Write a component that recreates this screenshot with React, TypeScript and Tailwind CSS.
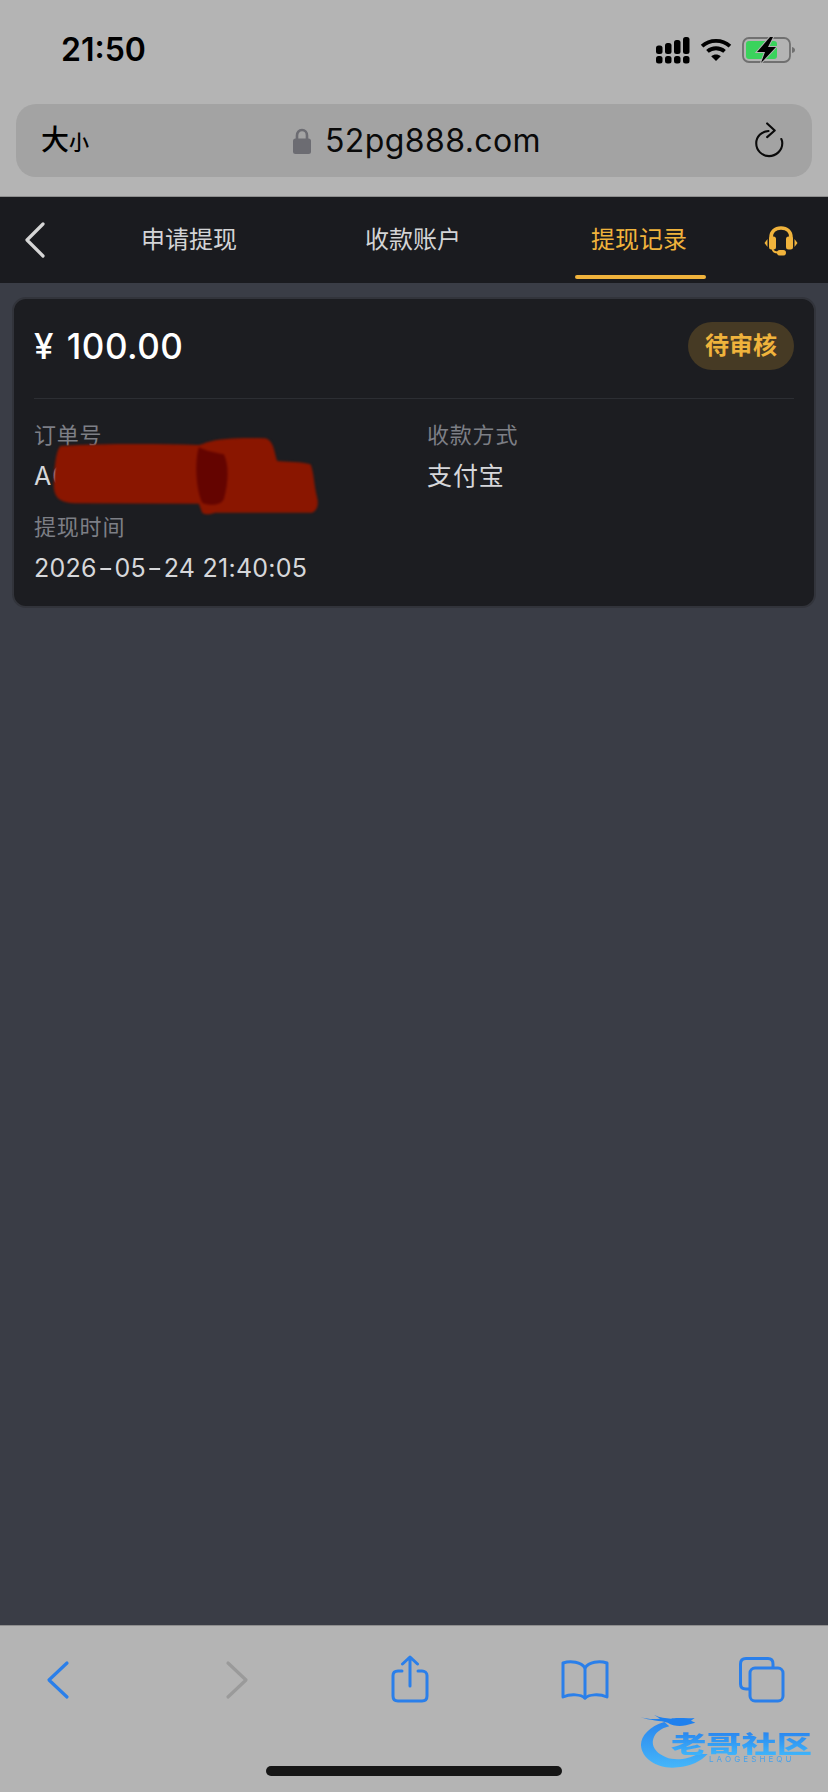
const sans = "font-['Inter','Noto_Sans_CJK_SC',sans-serif]";

function Signal() {
  return (
    <svg width="34" height="27" viewBox="0 0 34 27" fill="#000">
      <rect x="0" y="8.500" width="6.500" height="8.500" rx="2.500" />
      <rect x="9" y="6" width="6.500" height="11" rx="2.500" />
      <rect x="18" y="3" width="6.500" height="14" rx="2.500" />
      <rect x="27" y="0" width="6.500" height="17" rx="2.500" />
      <rect x="0" y="19" width="6.500" height="7.500" rx="2.500" />
      <rect x="9" y="19" width="6.500" height="7.500" rx="2.500" />
      <rect x="18" y="19" width="6.500" height="7.500" rx="2.500" />
      <rect x="27" y="19" width="6.500" height="7.500" rx="2.500" />
    </svg>
  );
}

function Wifi() {
  return (
    <svg width="32" height="24" viewBox="0 0 33 25" fill="none" stroke="#000" strokeWidth="4">
      <path d="M2 9.500C10 2.200 23 2.200 31 9.500" />
      <path d="M7.600 15C12.600 10.600 20.400 10.600 25.400 15" />
      <path d="M11.500 20L16.500 25L21.500 20C18.500 17.600 14.500 17.600 11.500 20Z" fill="#000" stroke="none" />
    </svg>
  );
}

function Battery() {
  return (
    <svg width="54" height="26" viewBox="0 0 54 26" fill="none">
      <rect x="1" y="1" width="47" height="24" rx="6" stroke="#707070" strokeWidth="1.800" />
      <rect x="4" y="4" width="31" height="18" rx="3" fill="#3ad35c" />
      <path d="M50 10C52 10.500 53 11.500 53 13C53 14.500 52 15.500 50 16Z" fill="#707070" />
      <path d="M28 0L15 15H23L19 26L34 10H26L31 0Z" fill="#000" stroke="#b4b4b4" strokeWidth="2" paintOrder="stroke" />
    </svg>
  );
}

function Lock() {
  return (
    <svg width="18" height="26" viewBox="0 0 18 26" fill="none">
      <path d="M4 12V7.500C4 4.500 6 2 9 2C12 2 14 4.500 14 7.500V12" stroke="#6c6c72" strokeWidth="2.600" />
      <rect x="0" y="10.500" width="18" height="15.500" rx="2.500" fill="#6c6c72" />
    </svg>
  );
}

function Reload() {
  return (
    <svg width="31" height="36" viewBox="0 0 32 38" fill="none" stroke="#0a0a0a" strokeWidth="2.200" strokeLinecap="round" strokeLinejoin="round">
      <path d="M15 9.500C7.500 10 2 15.500 2 22.500C2 30 8 36 15.500 36C23 36 29.500 30 29.500 22.500C29.500 20.500 29 19 28.500 18" />
      <path d="M13.500 1.500L21.500 9L13.500 16" />
    </svg>
  );
}

function Headset() {
  return (
    <svg width="34" height="30" viewBox="0 0 34 30" fill="#f0b33c">
      <path d="M7 15V11.500C7 5.500 11 2 17 2C23 2 27 5.500 27 11.500V15" fill="none" stroke="#f0b33c" strokeWidth="3.600" />
      <rect x="5" y="10.500" width="7" height="13" rx="2.500" />
      <rect x="22" y="10.500" width="7" height="13" rx="2.500" />
      <path d="M0.500 17L3.500 13V21Z" />
      <path d="M33.500 17L30.500 13V21Z" />
      <path d="M8.500 23C9 25.500 11 26.500 14 26.500" fill="none" stroke="#f0b33c" strokeWidth="1.800" />
      <rect x="13" y="24" width="9" height="5.500" rx="2.700" />
    </svg>
  );
}

function Scribble() {
  return (
    <svg className="absolute left-[38px] top-[138px] blur-[0.8px]" width="267" height="78" viewBox="150 438 800 234">
      <path d="M175 465C160 480 155 540 155 590C158 625 180 635 220 637L590 638L600 665C610 672 625 670 640 665L930 665C945 660 950 640 945 620C935 580 935 540 925 520C900 512 850 512 825 510C815 480 815 450 790 442C730 440 660 440 610 455C600 460 595 460 590 462C450 458 300 458 175 465Z" fill="#8a1600" />
      <path d="M590 468C578 510 580 590 600 635C620 645 655 645 665 625C680 570 680 520 665 490C640 485 610 480 590 468Z" fill="#640400" />
    </svg>
  );
}

function Logo() {
  return (
    <div className="absolute left-[636px] top-[1708px] w-[184px] h-[66px] blur-[0.4px]">
      <svg className="absolute left-0 top-0" width="184" height="66" viewBox="0 0 552 198" fill="none">
        <defs>
          <linearGradient id="swoosh" x1="0" y1="0" x2="0" y2="1">
            <stop offset="0" stopColor="#2a86ee" />
            <stop offset="1" stopColor="#45b6fa" />
          </linearGradient>
        </defs>
        <path d="M85 42C40 55 14 85 15 112C17 155 70 185 125 178C165 174 195 160 215 138L186 138C160 152 120 160 90 148C60 136 45 115 52 92C58 75 72 62 100 55Z" fill="url(#swoosh)" />
        <path d="M14 28C35 34 55 34 72 32C66 28 60 24 54 20C72 30 90 30 105 32C120 28 150 32 176 30L165 38L178 44L150 52C130 56 110 54 95 44C75 38 40 38 14 28Z" fill="#1f80ee" />
      </svg>
      <div className="absolute left-[35px] top-[23px] w-[96px] h-[24px] origin-left scale-x-[1.47] text-[24px] leading-[24px] font-black whitespace-nowrap bg-linear-to-b from-[#2a84ee] to-[#3fb4fa] bg-clip-text text-transparent font-['Noto_Sans_CJK_SC',sans-serif]">老哥社区</div>
      <div className="absolute left-[73px] top-[47px] text-[8px] leading-[8px] tracking-[3.100px] text-[#4aa2ea] whitespace-nowrap font-['Inter',sans-serif]">LAOGESHEQU</div>
    </div>
  );
}

function Field({ label, children }: { label: string; children: React.ReactNode }) {
  return (
    <div className="flex flex-col">
      <div className="h-[36px] leading-[36px] text-[22px] tracking-[0.800px] text-[#7d7f86]">{label}</div>
      <div className="h-[46px] leading-[46px] text-[25px] text-[#d6d7da] whitespace-nowrap tracking-[0.900px]">{children}</div>
    </div>
  );
}

function Dash() {
  return <span className="inline-block px-[3px] scale-x-[1.35]">-</span>;
}

export default function App() {
  const tabs = ["申请提现", "收款账户"];
  return (
    <div className={`relative w-[828px] h-[1792px] flex flex-col bg-[#3a3d46] overflow-hidden ${sans}`}>
      <header className="h-[197px] shrink-0 bg-[#b4b4b4] border-b border-[#8e8e8e] flex flex-col">
        <div className="h-[104px] pl-[61px] pr-[32px] flex items-start justify-between">
          <span className="mt-[28px] text-[32px] leading-[44px] font-semibold text-black">21:50</span>
          <div className="mt-[37px] flex items-start gap-[10px]">
            <Signal />
            <Wifi />
            <Battery />
          </div>
        </div>
        <div className="mx-[16px] h-[73px] rounded-[20px] bg-[#a3a3a3] relative flex items-center justify-center">
          <div className="absolute left-[25px] top-[20px] flex items-end text-black leading-none font-['Noto_Sans_CJK_SC',sans-serif]">
            <span className="text-[28px] font-medium">大</span>
            <span className="text-[20px] font-medium">小</span>
          </div>
          <div className="ml-[6px] flex items-center gap-[14px]">
            <Lock />
            <span className="text-[32px] tracking-[0.400px] text-[#0a0a0a]">52pg888.com</span>
          </div>
          <div className="absolute right-[27px] top-[18px]"><Reload /></div>
        </div>
      </header>

      <nav className="h-[86px] shrink-0 bg-[#1a1b1f] relative flex items-center">
        <svg className="ml-[24px] shrink-0" width="22" height="36" viewBox="0 0 22 36" fill="none" stroke="#d6d6d6" strokeWidth="3.200" strokeLinecap="round" strokeLinejoin="round">
          <path d="M19 2L3 18L19 34" />
        </svg>
        <div className="flex-1 flex text-[24px] pl-[95px]">
          {tabs.map((t) => (
            <div key={t} className="w-[224px] text-[#d3d4d6] whitespace-nowrap">{t}</div>
          ))}
          <div className="ml-[2px] text-[#f0b33c] whitespace-nowrap">提现记录</div>
        </div>
        <div className="mr-[30px] shrink-0 mt-[1px]"><Headset /></div>
        <div className="absolute left-[575px] bottom-[4px] w-[131px] h-[4px] rounded-full bg-[#f0b33c]" />
      </nav>

      <main className="flex-1 pt-[14px] px-[12px]">
        <section className="relative h-[311px] rounded-[14px] border-2 border-[#32343b] bg-[#1c1d21] px-[20px] pt-[23px]">
          <div className="flex items-center justify-between pb-[28px] border-b border-[#2c2e33]">
            <span className="text-[35px] leading-[50px] mt-[-1px] mb-[-1px] font-medium text-white tracking-[0.500px] whitespace-pre [word-spacing:3px]">¥ 100.00</span>
            <span className="h-[48px] w-[106px] rounded-full bg-[#463a24] text-[#f0b33c] text-[24px] leading-[48px] font-semibold text-center">待审核</span>
          </div>
          <div className="grid grid-cols-2 gap-x-[26px] gap-y-[10px] pt-[18px]">
            <Field label="订单号">A0</Field>
            <Field label="收款方式">支付宝</Field>
            <Field label="提现时间">
              <span className="tracking-[0.250px]">2026<Dash />05<Dash />24 21:40:05</span>
            </Field>
          </div>
          <Scribble />
        </section>
      </main>

      <footer className="relative h-[167px] shrink-0 bg-[#b4b4b4] border-t border-[#8e8e8e] pt-[20px] pl-[46px] flex items-start">
        <svg className="mt-[14px] shrink-0" width="24" height="40" viewBox="0 0 24 40" fill="none" stroke="#2a7fea" strokeWidth="3.200" strokeLinecap="round" strokeLinejoin="round">
          <path d="M21 3L3 20L21 37" />
        </svg>
        <svg className="ml-[155px] mt-[14px] shrink-0" width="24" height="40" viewBox="0 0 24 40" fill="none" stroke="#9a9a9a" strokeWidth="3.200" strokeLinecap="round" strokeLinejoin="round">
          <path d="M3 3L21 20L3 37" />
        </svg>
        <svg className="ml-[142px] mt-[9px] shrink-0" width="38" height="48" viewBox="0 0 38 48" fill="none" stroke="#2a7fea" strokeWidth="3" strokeLinecap="round" strokeLinejoin="round">
          <path d="M11 16H7C3.500 16 2 18 2 20.500V41C2 44.500 4 46 7 46H31C34 46 36 44.500 36 41V20.500C36 18 34 16 31 16H27" />
          <path d="M19 31V2M11.500 9L19 2L26.500 9" />
        </svg>
        <svg className="ml-[132px] mt-[14px] shrink-0" width="48" height="40" viewBox="0 0 48 40" fill="none" stroke="#2a7fea" strokeWidth="3" strokeLinecap="round" strokeLinejoin="round">
          <path d="M24 8C20 2 10 0.500 2 3V37C10 33.500 20 34.500 24 38C28 34.500 38 33.500 46 37V3C38 0.500 28 2 24 8Z" />
          <path d="M24 8V38" />
        </svg>
        <svg className="ml-[130px] mt-[11px] shrink-0" width="46" height="46" viewBox="0 0 46 46" fill="none" stroke="#2a7fea" strokeWidth="3">
          <path d="M11 32H7C3.500 32 1.500 30 1.500 27V7C1.500 3.500 3.500 1.500 7 1.500H29C32 1.500 34 3.500 34 7V11" />
          <rect x="11" y="11" width="33" height="33" rx="5" />
        </svg>
        <div className="absolute left-[266px] top-[140px] w-[296px] h-[10px] rounded-full bg-[#161616]" />
      </footer>
      <Logo />
    </div>
  );
}
